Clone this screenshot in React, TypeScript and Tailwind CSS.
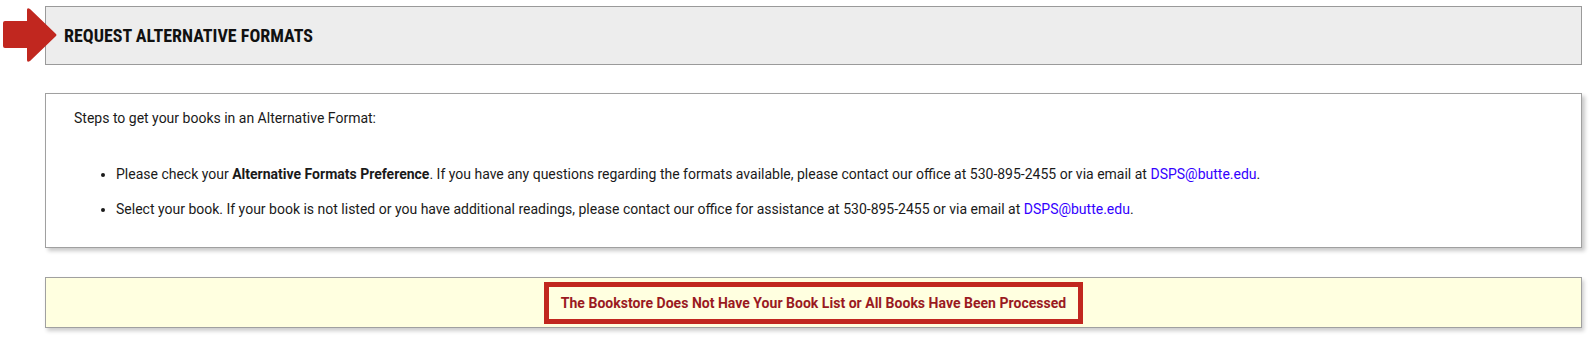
import React from 'react';

const LINK = 'text-[#3300ff] hover:underline';

const Arrow = () => (
  <svg
    className="absolute left-[2px] top-[7px]"
    width="57"
    height="57"
    viewBox="0 0 57 57"
    aria-hidden="true"
  >
    <path
      d="M3 14 Q1 14 1 16 L1 39 Q1 41 3 41 L25 41 L25 53 Q25 56 28 54 L54 29 Q55 28 54 27 L28 2 Q25 0 25 3 L25 14 Z"
      fill="#c1271f"
    />
  </svg>
);

const App: React.FC = () => {
  return (
    <div className="min-h-[341px] bg-white font-['Roboto',sans-serif] text-[14px] text-[#1a1a1a]">
      <div className="relative pt-[6px] pl-[45px] pr-[11px]">
        <Arrow />
        <div className="h-[59px] border border-[#9a9a9a] bg-[#ededed] pl-[18px] flex items-center">
          <h2 className="font-['Roboto',sans-serif] font-stretch-condensed text-[18px] font-bold text-[#111]">
            REQUEST ALTERNATIVE FORMATS
          </h2>
        </div>
      </div>

      <div className="mt-[28px] ml-[45px] mr-[11px] h-[155px] border border-[#a0a0a0] bg-white shadow-[3px_3px_4px_rgba(0,0,0,0.22)] pl-[28px] pt-[14px]">
        <p className="leading-[20px]">Steps to get your books in an Alternative Format:</p>
        <ul className="mt-[36px] ml-[42px] list-disc flex flex-col gap-[15px] leading-[20px]">
          <li>
            Please check your <strong className="font-bold">Alternative Formats Preference</strong>. If you have any
            questions regarding the formats available, please contact our office at 530-895-2455 or via email at{' '}
            <a href="#" className={LINK}>DSPS@butte.edu</a>.
          </li>
          <li>
            Select your book. If your book is not listed or you have additional readings, please contact our office
            for assistance at 530-895-2455 or via email at <a href="#" className={LINK}>DSPS@butte.edu</a>.
          </li>
        </ul>
      </div>

      <div className="mt-[29px] ml-[45px] mr-[11px] h-[51px] border border-[#a0a0a0] bg-[#ffffe0] shadow-[2px_3px_4px_rgba(0,0,0,0.2)] flex justify-center pt-[4px]">
        <div className="h-[42px] border-[5px] border-[#c1271f] px-[12px] flex items-center">
          <span className="font-bold text-[14px] tracking-[0.02px] text-[#9a1a1f]">
            The Bookstore Does Not Have Your Book List or All Books Have Been Processed
          </span>
        </div>
      </div>
    </div>
  );
};

export default App;
